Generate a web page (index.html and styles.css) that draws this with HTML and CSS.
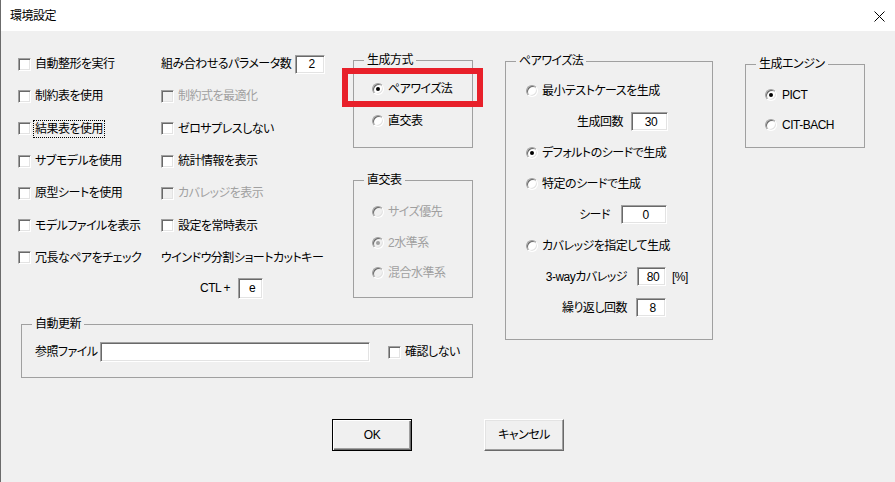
FILE: index.html
```html
<!DOCTYPE html>
<html lang="ja">
<head>
  <meta charset="UTF-8">
  <title>環境設定</title>
  <link rel="stylesheet" href="styles.css">
</head>
<body>
  <div class="window">
    <div class="titlebar">
      <span class="title">環境設定</span>
      <svg class="close" width="11" height="11" viewBox="0 0 11 11">
        <path d="M0.5 0.5 L10.5 10.5 M10.5 0.5 L0.5 10.5" stroke="#000" stroke-width="1" fill="none"/>
      </svg>
    </div>

    <div class="main">
      <div class="left">
        <div class="top">
          <div class="col1">
            <div class="row"><span class="cb"></span><span>自動整形を実行</span></div>
            <div class="row"><span class="cb"></span><span>制約表を使用</span></div>
            <div class="row"><span class="cb"></span><span class="focus">結果表を使用</span></div>
            <div class="row"><span class="cb"></span><span>サブモデルを使用</span></div>
            <div class="row"><span class="cb"></span><span>原型シートを使用</span></div>
            <div class="row"><span class="cb"></span><span>モデルファイルを表示</span></div>
            <div class="row"><span class="cb"></span><span>冗長なペアをチェック</span></div>
          </div>

          <div class="col2">
            <div class="row"><span class="param-label">組み合わせるパラメータ数</span><span class="tb w30">2</span></div>
            <div class="row disabled"><span class="cb off"></span><span>制約式を最適化</span></div>
            <div class="row"><span class="cb"></span><span>ゼロサプレスしない</span></div>
            <div class="row"><span class="cb"></span><span>統計情報を表示</span></div>
            <div class="row disabled"><span class="cb off"></span><span>カバレッジを表示</span></div>
            <div class="row"><span class="cb"></span><span>設定を常時表示</span></div>
            <div class="row"><span>ウインドウ分割ショートカットキー</span></div>
            <div class="ctl-row"><span>CTL +</span><span class="tb key">e</span></div>
          </div>

          <div class="groups">
            <fieldset class="group g-mode">
              <legend>生成方式</legend>
              <div class="rrow"><span class="rb on"></span><span>ペアワイズ法</span></div>
              <div class="rrow"><span class="rb"></span><span>直交表</span></div>
            </fieldset>
            <div class="highlight"></div>

            <fieldset class="group g-ortho">
              <legend>直交表</legend>
              <div class="rrow disabled"><span class="rb off"></span><span>サイズ優先</span></div>
              <div class="rrow disabled"><span class="rb off on"></span><span>2水準系</span></div>
              <div class="rrow disabled"><span class="rb off"></span><span>混合水準系</span></div>
            </fieldset>
          </div>
        </div>

        <fieldset class="group g-auto">
          <legend>自動更新</legend>
          <div class="auto-row">
            <span class="ref-label">参照ファイル</span>
            <span class="tb file"></span>
            <span class="cb confirm"></span><span>確認しない</span>
          </div>
        </fieldset>
      </div>

      <fieldset class="group g-pair">
        <legend>ペアワイズ法</legend>
        <div class="prow radio"><span class="rb"></span><span>最小テストケースを生成</span></div>
        <div class="prow"><span class="sub-label count">生成回数</span><span class="tb count">30</span></div>
        <div class="prow radio"><span class="rb on"></span><span>デフォルトのシードで生成</span></div>
        <div class="prow radio"><span class="rb"></span><span>特定のシードで生成</span></div>
        <div class="prow"><span class="sub-label seed">シード</span><span class="tb seed">0</span></div>
        <div class="prow radio"><span class="rb"></span><span>カバレッジを指定して生成</span></div>
        <div class="prow"><span class="sub-label cov">3-wayカバレッジ</span><span class="tb cov">80</span><span class="pct">[%]</span></div>
        <div class="prow"><span class="sub-label rep">繰り返し回数</span><span class="tb rep">8</span></div>
      </fieldset>

      <fieldset class="group g-engine">
        <legend>生成エンジン</legend>
        <div class="erow"><span class="rb on"></span><span>PICT</span></div>
        <div class="erow"><span class="rb"></span><span>CIT-BACH</span></div>
      </fieldset>
    </div>

    <div class="buttons">
      <div class="btn default">OK</div>
      <div class="btn">キャンセル</div>
    </div>
  </div>
</body>
</html>
```

FILE: styles.css
```css
* {
  box-sizing: border-box;
}
body {
  margin: 0;
  background: #f0f0f0;
  color: #000;
  font-family: "Liberation Sans", "Noto Sans CJK JP", sans-serif;
  font-size: 12px;
  line-height: 14px;
  letter-spacing: -0.5px;
  font-feature-settings: "palt";
}
.window {
  width: 895px;
  height: 482px;
  border-left: 1px solid #6b6b6b;
  background: #f0f0f0;
  overflow: hidden;
}
.titlebar {
  height: 31px;
  background: #fff;
  display: flex;
  align-items: center;
  justify-content: space-between;
  padding: 0 10px 0 9px;
}
.close {
  display: block;
  margin-top: 2px;
}

.main {
  display: flex;
  padding: 17px 0 0 17px;
}
.left {
  width: 455px;
}
.top {
  display: flex;
}
.col1 {
  width: 143px;
}
.col2 {
  width: 192px;
}
.groups {
  width: 120px;
  padding-top: 5px;
  position: relative;
}
.row {
  height: 32.3px;
  display: flex;
  align-items: center;
  white-space: nowrap;
}
.disabled {
  color: #a0a0a0;
}
.focus {
  outline: 1px dotted #000;
  outline-offset: 1px;
}

/* classic 3D sunken controls */
.cb, .rb, .tb {
  background: #fff;
  border: 1px solid;
  border-color: #a0a0a0 #fff #fff #a0a0a0;
  box-shadow: inset 1px 1px 0 #696969, inset -1px -1px 0 #e3e3e3;
  flex: none;
}
.cb {
  width: 13px;
  height: 13px;
  margin-right: 4px;
}
.cb.off, .rb.off {
  background: #f0f0f0;
}
.rb {
  width: 12px;
  height: 12px;
  border-radius: 50%;
  margin-right: 4px;
  display: flex;
  align-items: center;
  justify-content: center;
}
.rb.on::after {
  content: "";
  width: 4px;
  height: 4px;
  border-radius: 50%;
  background: #000;
}
.rb.off.on::after {
  background: #a0a0a0;
}
.tb {
  height: 19px;
  display: flex;
  align-items: center;
  justify-content: center;
  padding-left: 3px;
}

.param-label {
  width: 134px;
}
.w30 {
  width: 30px;
}
.ctl-row {
  height: 28px;
  display: flex;
  align-items: center;
  padding-left: 39px;
}
.key {
  width: 25px;
  height: 21px;
  margin-left: 8px;
}

/* group boxes */
.group {
  margin: 0;
  padding: 0;
  border: 1px solid #a0a0a0;
  min-width: 0;
}
.group legend {
  margin-left: 10px;
  padding: 0 3px;
  line-height: 14px;
}
.g-mode {
  padding: 6px 0 10px 0;
}
.rrow {
  display: flex;
  align-items: center;
  height: 32px;
  padding-left: 18px;
}
.g-ortho {
  margin-top: 25px;
  padding: 10px 0 8px 0;
}
.g-ortho .rrow {
  height: 30.5px;
}
.highlight {
  position: absolute;
  left: -11px;
  top: 20px;
  width: 141px;
  height: 39px;
  border: 6px solid #e8202a;
}

.g-auto {
  margin: 15px 0 0 3px;
  width: 452px;
  padding: 11px 0 15px 0;
}
.auto-row {
  height: 20px;
  display: flex;
  align-items: center;
  padding-left: 13px;
  white-space: nowrap;
}
.ref-label {
  width: 65px;
}
.file {
  width: 270px;
  height: 20px;
}
.confirm {
  margin-left: 18px;
}

.g-pair {
  width: 208px;
  margin: 6px 0 0 32px;
  padding: 7px 0 16px 0;
  align-self: flex-start;
}
.prow {
  height: 31px;
  display: flex;
  align-items: center;
  white-space: nowrap;
}
.prow.radio {
  padding-left: 20px;
}
.sub-label {
  text-align: right;
}
.sub-label.count { width: 117px; }
.sub-label.seed { width: 104px; }
.sub-label.cov { width: 121px; }
.sub-label.rep { width: 121px; }
.tb.count { width: 37px; margin-left: 8px; }
.tb.seed { width: 46px; margin-left: 11px; }
.tb.cov { width: 29px; margin-left: 10px; }
.tb.rep { width: 30px; margin-left: 9px; }
.pct {
  margin-left: 6px;
}

.g-engine {
  width: 120px;
  margin: 9px 0 0 32px;
  padding: 9px 0 7px 0;
  align-self: flex-start;
}
.erow {
  height: 30px;
  display: flex;
  align-items: center;
  padding-left: 19px;
}
.erow .rb {
  margin-right: 5px;
}

.buttons {
  display: flex;
  justify-content: center;
  gap: 72px;
  margin-top: 41px;
}
.btn {
  width: 80px;
  height: 32px;
  display: flex;
  align-items: center;
  justify-content: center;
  background: #f0f0f0;
  border: 1px solid;
  border-color: #fff #696969 #696969 #fff;
  box-shadow: inset -1px -1px 0 #a0a0a0, inset 1px 1px 0 #e3e3e3;
}
.btn.default {
  border-color: #000;
  box-shadow: inset 1px 1px 0 #fff, inset -1px -1px 0 #696969, inset -2px -2px 0 #a0a0a0;
}
```
